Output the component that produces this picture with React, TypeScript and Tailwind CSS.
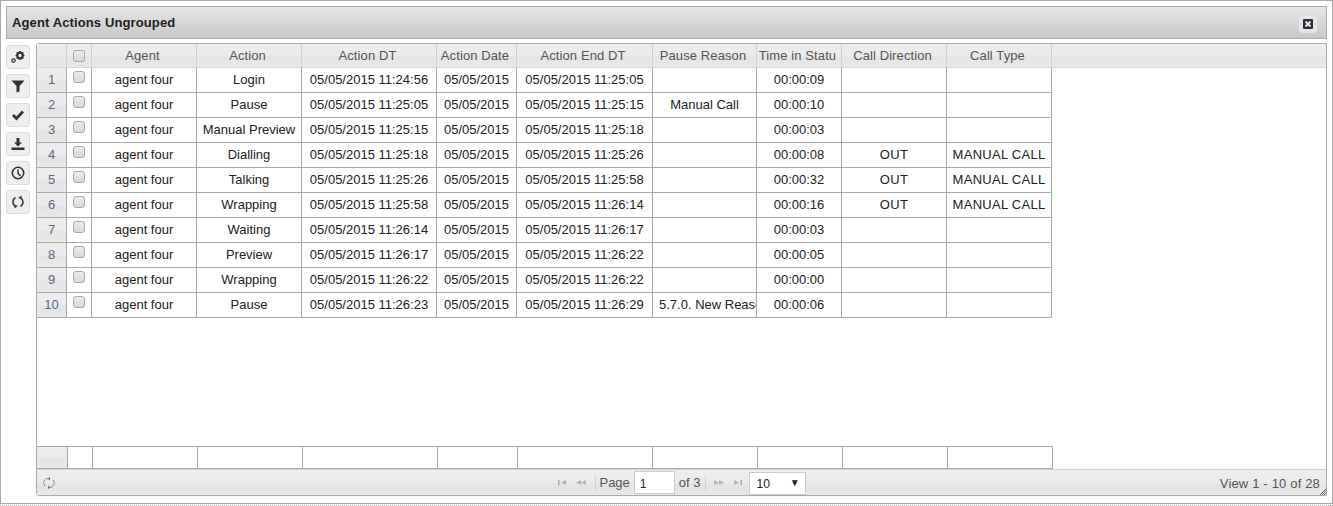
import React from "react";

const widths = [30, 25, 105, 105, 135, 80, 136, 104, 85, 105, 105];
const footWidths = [31, 25, 105, 105, 135, 80, 135, 105, 85, 105, 105];
const headers = ["", "", "Agent", "Action", "Action DT", "Action Date", "Action End DT", "Pause Reason", "Time in Statu", "Call Direction", "Call Type"];
const rows = [
  ["Login", "05/05/2015 11:24:56", "05/05/2015 11:25:05", "", "00:00:09", "", ""],
  ["Pause", "05/05/2015 11:25:05", "05/05/2015 11:25:15", "Manual Call", "00:00:10", "", ""],
  ["Manual Preview", "05/05/2015 11:25:15", "05/05/2015 11:25:18", "", "00:00:03", "", ""],
  ["Dialling", "05/05/2015 11:25:18", "05/05/2015 11:25:26", "", "00:00:08", "OUT", "MANUAL CALL"],
  ["Talking", "05/05/2015 11:25:26", "05/05/2015 11:25:58", "", "00:00:32", "OUT", "MANUAL CALL"],
  ["Wrapping", "05/05/2015 11:25:58", "05/05/2015 11:26:14", "", "00:00:16", "OUT", "MANUAL CALL"],
  ["Waiting", "05/05/2015 11:26:14", "05/05/2015 11:26:17", "", "00:00:03", "", ""],
  ["Preview", "05/05/2015 11:26:17", "05/05/2015 11:26:22", "", "00:00:05", "", ""],
  ["Wrapping", "05/05/2015 11:26:22", "05/05/2015 11:26:22", "", "00:00:00", "", ""],
  ["Pause", "05/05/2015 11:26:23", "05/05/2015 11:26:29", "5.7.0. New Reason", "00:00:06", "", ""],
];

const grad = "bg-[linear-gradient(to_bottom,#ededed_0%,#ebebeb_50%,#e4e4e4_56%,#e8e8e8_100%)]";

function Box() {
  return <span className="block w-[12px] h-[12px] rounded-[3px] border border-[#a8a8a8] bg-gradient-to-b from-[#ececec] to-[#d8d8d8]" />;
}

function ToolBtn({ children }: { children: React.ReactNode }) {
  return (
    <div className="w-[24px] h-[24px] rounded-[3px] border border-[#dcdcdc] bg-[#eeeeee] flex items-center justify-center">
      {children}
    </div>
  );
}

function Tri({ flip, bar }: { flip?: boolean; bar?: boolean }) {
  return (
    <svg width="11" height="7" viewBox="0 0 11 7" className={flip ? "-scale-x-100" : ""}>
      {bar ? <rect x="1" y="1" width="1.5" height="5" fill="#aaa" /> : null}
      <path d={bar ? "M4 3.5 L9 1 V6Z" : "M0 3.5 L5 1 V6Z M5 3.5 L10 1 V6Z"} fill="#b4b4b4" />
    </svg>
  );
}

export default function App() {
  return (
    <div className="w-[1333px] h-[506px] bg-white text-[#222] font-['Liberation_Sans',Arial,sans-serif] text-[13px] overflow-hidden">
      <div className="w-[1333px] h-[506px] border-b border-dotted border-[#aaa]">
        <div className="w-[1333px] h-[504px] border border-[#aaa] pt-[5px] px-[5px] flex flex-col">
          <div className="h-[33px] shrink-0 border border-[#aaa] bg-gradient-to-b from-[#e6e6e6] to-[#c8c8c8] flex items-center justify-between pl-[5px] pr-[9px]">
            <span className="font-bold text-[13px] tracking-[0.12px] text-[#222]">Agent Actions Ungrouped</span>
            <div className="w-[18px] h-[18px] mt-[2px] rounded-[3px] bg-[#e4e4e4] flex items-center justify-center">
              <svg width="10" height="10" viewBox="0 0 10 10">
                <rect width="10" height="10" rx="1" fill="#2a2f3a" />
                <path d="M2.5 2.5 L7.5 7.5 M7.5 2.5 L2.5 7.5" stroke="#eee" strokeWidth="1.8" />
              </svg>
            </div>
          </div>
          <div className="flex mt-[4px] gap-[5px] h-[454px]">
            <div className="w-[25px] shrink-0 flex flex-col gap-[5px] pt-[2px]">
              <ToolBtn>
                <svg width="16" height="14" viewBox="0 0 16 14">
                  <circle cx="10" cy="5.5" r="2.8" fill="none" stroke="#333" strokeWidth="2.2" />
                  <path d="M10 1 V2.5 M10 8.5 V10 M5.5 5.5 H7 M13 5.5 H14.5 M6.8 2.3 L8 3.5 M12 7.5 L13.2 8.7 M13.2 2.3 L12 3.5 M8 7.5 L6.8 8.7" stroke="#333" strokeWidth="1.2" />
                  <circle cx="3.5" cy="10.5" r="1.7" fill="none" stroke="#333" strokeWidth="1.2" />
                </svg>
              </ToolBtn>
              <ToolBtn>
                <svg width="14" height="13" viewBox="0 0 14 13">
                  <path d="M0.5 0.5 H13.5 L8.5 6 V11.5 L5.5 12.5 V6 Z" fill="#333" />
                </svg>
              </ToolBtn>
              <ToolBtn>
                <svg width="14" height="12" viewBox="0 0 14 12">
                  <path d="M2 6 L5.5 9.5 L12 2.5" fill="none" stroke="#333" strokeWidth="2.8" />
                </svg>
              </ToolBtn>
              <ToolBtn>
                <svg width="14" height="14" viewBox="0 0 14 14">
                  <path d="M5.5 1 H8.5 V5.5 H11 L7 9.5 L3 5.5 H5.5 Z" fill="#333" />
                  <rect x="0.5" y="10.5" width="13" height="2.5" fill="#333" />
                </svg>
              </ToolBtn>
              <ToolBtn>
                <svg width="14" height="14" viewBox="0 0 14 14">
                  <circle cx="7" cy="7" r="5.7" fill="none" stroke="#333" strokeWidth="1.6" />
                  <path d="M7 3.5 V7.2 L9.5 10" fill="none" stroke="#333" strokeWidth="1.5" />
                </svg>
              </ToolBtn>
              <ToolBtn>
                <svg width="14" height="14" viewBox="0 0 14 14">
                  <path d="M4.5 2.5 A5 5 0 0 0 4.2 11" fill="none" stroke="#444" strokeWidth="1.7" />
                  <path d="M9.5 11.5 A5 5 0 0 0 9.8 3" fill="none" stroke="#444" strokeWidth="1.7" />
                  <path d="M7 11 L3 9.5 L3.5 13.5 Z M7 3 L11 4.5 L10.5 0.5 Z" fill="#444" />
                </svg>
              </ToolBtn>
            </div>

            <div className="relative flex-1 h-[453px] border border-[#aaa] rounded-tl-[3px] rounded-bl-[3px] flex flex-col">
              <div className={`h-[24px] shrink-0 flex border-b border-[#d9d9d9] ${grad}`}>
                {headers.map((h, i) => (
                  <div key={i} style={{ width: widths[i] }} className={`shrink-0 border-r border-[#d0d0d0] flex items-center justify-center overflow-hidden whitespace-nowrap tracking-[0.1px] text-[#555] ${i > 1 ? "pr-[3px]" : ""}`}>
                    {i === 1 ? <Box /> : h}
                  </div>
                ))}
              </div>
              <div className="flex-1">
                {rows.map((r, n) => {
                  const ordered = ["agent four", r[0], r[1], "05/05/2015", r[2], r[3], r[4], r[5], r[6]];
                  return (
                    <div key={n} className="h-[25px] flex">
                      <div style={{ width: widths[0] }} className={`shrink-0 border-r border-b border-[#aaa] flex items-center justify-center text-[#556a88] ${grad}`}>
                        {n + 1}
                      </div>
                      <div style={{ width: widths[1] }} className="shrink-0 border-r border-b border-[#aaa] flex justify-center pt-[3px]">
                        <Box />
                      </div>
                      {ordered.map((c, i) => (
                        <div key={i} style={{ width: widths[i + 2] }} className="shrink-0 border-r border-b border-[#aaa] flex items-center justify-center overflow-hidden whitespace-nowrap">
                          <span className={c.startsWith("5.7.0") ? "w-full pl-[6px]" : c === "MANUAL CALL" || c === "OUT" ? "tracking-[0.27px]" : ""}>{c}</span>
                        </div>
                      ))}
                    </div>
                  );
                })}
              </div>
              <div className="h-[23px] w-[1016px] shrink-0 flex border-t border-b border-[#aaa]">
                {footWidths.map((w, i) => (
                  <div key={i} style={{ width: w }} className={`shrink-0 border-r border-[#aaa] ${i === 0 ? grad : "bg-white"}`} />
                ))}
              </div>
              <div className={`h-[26px] shrink-0 grid grid-cols-[1fr_auto_1fr] items-center border-t border-[#d2d2d2] pl-[6px] pr-[6px] text-[#555] ${grad}`}>
                <svg width="12" height="12" viewBox="0 0 12 12" className="mt-[1px]">
                  <path d="M2 9 A4.5 4.5 0 0 1 6 1.5 M10 3 A4.5 4.5 0 0 1 6 10.5" fill="none" stroke="#777" strokeWidth="1" strokeDasharray="2 0.7" />
                  <path d="M7 0 L4.5 1.5 L7 3.5 Z M5 12 L7.5 10.5 L5 8.5 Z" fill="#777" />
                </svg>
                <div className="flex items-center h-[24px]">
                  <div className="flex items-center gap-[8px]">
                    <Tri bar />
                    <Tri />
                  </div>
                  <div className="w-px h-[14px] bg-[#d0d0d0] ml-[8px]" />
                  <span className="ml-[3px]">Page</span>
                  <div className="w-[41px] h-[23px] ml-[4px] bg-white border border-[#ccc] text-[#222] text-[12px] flex items-center pl-[5px] pt-[2px]">1</div>
                  <span className="ml-[4px]">of 3</span>
                  <div className="w-px h-[14px] bg-[#d0d0d0] ml-[4px]" />
                  <div className="flex items-center gap-[8px] ml-[7px]">
                    <Tri flip />
                    <Tri flip bar />
                  </div>
                  <div className="w-[57px] h-[23px] ml-[6px] mt-[1px] bg-white border border-[#ccc] text-[#222] text-[12px] flex items-center justify-between pl-[7px] pr-[5px] pt-[2px]">
                    <span>10</span>
                    <span className="text-[10px] -mt-[3px]">▼</span>
                  </div>
                </div>
                <span className="justify-self-end mt-[2px] tracking-[0.17px]">View 1 - 10 of 28</span>
              </div>
              <svg width="6" height="6" viewBox="0 0 6 6" className="absolute right-0 bottom-0">
                <path d="M0 6 L6 0 M2 6 L6 2 M4 6 L6 4" stroke="#444" strokeWidth="0.8" />
              </svg>
            </div>
          </div>
        </div>
      </div>
    </div>
  );
}
